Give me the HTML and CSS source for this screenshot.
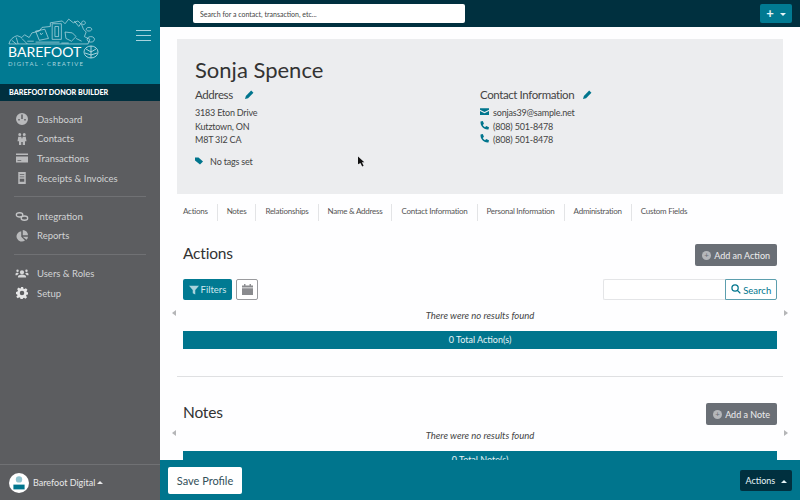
FILE: index.html
```html
<!DOCTYPE html>
<html>

<head>
    <title>Sonja Spence - Barefoot Donor Builder</title>
    <link rel="stylesheet" href="styles.css">
</head>

<body>
    <aside class="sidebar">
        <div class="brand">
            <div class="logo">
                <svg class="doodle" viewBox="0 0 100 30" width="92" height="28">
                    <g fill="none" stroke="#cfe6ec" stroke-width=".7">
                        <path d="M1 28c1-5 5-8 9-9l5 2 3-3 5 3 3-5 8-2 3-4 9-1V5l13-2 3 3 4-5 5 4 5-2 4 4 2 5 3 3-2 5 6 3-2 5z"/>
                        <path d="M30 14l10-2 4 10-10 2zM35 16l1 2 2-2"/>
                        <path d="M48 6h10v17H48zM51 9h4v11h-4z"/>
                        <path d="M62 15l8 1 4 4-5 5-6-3zM72 3l5 6 2-3M82 3a2 2 0 1 0 .1 0M88 10a3 2 0 1 0 .1 0"/>
                        <path d="M4 24l5 4M9 21l2 7M15 22l6 6M21 25h7M30 26h26M58 27h8M74 22l6 3M90 20a4 3 0 1 0 .1 0"/>
                    </g>
                </svg>
                <div class="wordmark">BAREFOOT
                    <svg viewBox="0 0 16 14" width="16" height="14">
                        <g fill="none" stroke="#cfe6ec" stroke-width=".8"><ellipse cx="8" cy="7" rx="7" ry="6"/><path d="M3 4l5 3 5-3M2 8l6 2 6-2M8 1v12"/></g>
                    </svg>
                </div>
                <div class="tagline">DIGITAL · CREATIVE</div>
            </div>
            <div class="burger"><span></span><span></span><span></span></div>
        </div>
        <div class="product">BAREFOOT DONOR BUILDER</div>
        <nav class="nav">
            <a class="nav-item">
                <svg viewBox="0 0 16 16" width="12" height="12"><path fill="#b9babc" d="M8 0a8 8 0 1 0 0 16A8 8 0 0 0 8 0zm-1 2h2v6H7zM3 8h2v2H3zm8 0h2v2h-2z"/></svg>
                Dashboard
            </a>
            <a class="nav-item">
                <svg viewBox="0 0 16 16" width="12" height="12"><path fill="#b9babc" d="M5 0a2 2 0 1 1 0 4 2 2 0 0 1 0-4zm6 0a2 2 0 1 1 0 4 2 2 0 0 1 0-4zM3 5h4l1 3 1-3h4l1 6h-2v5h-3v-4H7v4H4v-5H2z"/></svg>
                Contacts
            </a>
            <a class="nav-item">
                <svg viewBox="0 0 16 16" width="12" height="12"><path fill="#b9babc" d="M0 2h16v2H0zM0 6h16v8H0zm2 5v1h5v-1z"/></svg>
                Transactions
            </a>
            <a class="nav-item">
                <svg viewBox="0 0 16 16" width="12" height="12"><path fill="#b9babc" d="M3 0h10v16H3zm2 3v1h6V3zm0 3v1h6V6zm0 3v4h6V9z"/></svg>
                Receipts &amp; Invoices
            </a>
            <hr class="nav-rule">
            <a class="nav-item">
                <svg viewBox="0 0 16 16" width="13" height="13"><g fill="none" stroke="#c4c5c7" stroke-width="1.6"><ellipse cx="5" cy="6" rx="4" ry="2.6"/><ellipse cx="11" cy="10" rx="4" ry="2.6"/></g></svg>
                Integration
            </a>
            <a class="nav-item">
                <svg viewBox="0 0 16 16" width="12" height="12"><path fill="#b9babc" d="M7 1.5V9l5 5A7 7 0 1 1 7 1.5zM9 0a7 7 0 0 1 7 7H9zm0 9h7a7 7 0 0 1-2 4z"/></svg>
                Reports
            </a>
            <hr class="nav-rule">
            <a class="nav-item">
                <svg viewBox="0 0 16 16" width="13" height="13"><path fill="#d6d7d8" d="M8 4a2.6 2.6 0 1 1 0 5.200A2.600 2.600 0 0 1 8 4zM3 12c0-2 2-2.500 5-2.500s5 .5 5 2.500v1H3zM2.500 3a1.500 1.500 0 1 1 0 3 1.500 1.500 0 0 1 0-3zm11 0a1.500 1.500 0 1 1 0 3 1.500 1.500 0 0 1 0-3zM0 9c0-1.500 1-2 3-2l1 1-2 2H0zm16 0c0-1.500-1-2-3-2l-1 1 2 2h2z"/></svg>
                Users &amp; Roles
            </a>
            <a class="nav-item">
                <svg viewBox="0 0 16 16" width="12" height="12"><path fill="#e6e6e7" fill-rule="evenodd" d="M6.500 0h3l.4 2.200 1.400.6L13.200 1.500l2.100 2.100L14 5.500l.6 1.400 1.400.1v3l-2 .4-.6 1.400 1.300 1.800-2.100 2.100-1.900-1.300-1.400.6-.3 1.400h-3l-.4-2-1.400-.6-1.800 1.300-2.100-2.100L2 11.200l-.6-1.400L0 9.500v-3l2-.4.600-1.400L1.500 2.800l2.100-2.100L5.400 2l1.400-.6zM8 5a3 3 0 1 0 0 6 3 3 0 0 0 0-6z"/></svg>
                Setup
            </a>
        </nav>
        <div class="user">
            <span class="avatar">
                <svg viewBox="0 0 20 20" width="16" height="16"><circle cx="10" cy="5.500" r="4" fill="#8fc3cf"/><path fill="#00758d" d="M3 12h14v6H3z"/></svg>
            </span>
            Barefoot Digital <i class="caret-up"></i>
        </div>
    </aside>

    <main class="main">
        <header class="topbar">
            <input class="global-search" type="text" placeholder="Search for a contact, transaction, etc...">
            <button class="add-btn">+ <i class="caret-down"></i></button>
        </header>

        <div class="content">
            <section class="profile">
                <h1>Sonja Spence</h1>
                <div class="profile-cols">
                    <div class="profile-col">
                        <h2>Address <svg class="pencil pencil-far" viewBox="0 0 16 16" width="9" height="9"><path d="M11 1l4 4-9.500 9.500L0 16l1.500-5.500z"/></svg></h2>
                        <p>3183 Eton Drive</p>
                        <p>Kutztown, ON</p>
                        <p>M8T 3I2 CA</p>
                        <p class="tags">
                            <svg viewBox="0 0 16 16" width="8" height="8"><path fill="#00758d" d="M0 1h7l9 8-6 6-10-8z"/></svg>
                            No tags set
                        </p>
                    </div>
                    <div class="profile-col">
                        <h2>Contact Information <svg class="pencil" viewBox="0 0 16 16" width="9" height="9"><path d="M11 1l4 4-9.500 9.500L0 16l1.500-5.500z"/></svg></h2>
                        <p class="contact-line">
                            <svg viewBox="0 0 16 16" width="9" height="9"><path fill="#00758d" d="M0 2h16v3L8 9 0 5zm0 5l8 4 8-4v7H0z"/></svg>
                            sonjas39@sample.net
                        </p>
                        <p class="contact-line">
                            <svg viewBox="0 0 16 16" width="9" height="9"><path fill="#00758d" d="M1 1l4-1 2 5-2 2c1 2 2 3 4 4l2-2 5 2-1 4c-8 1-15-6-14-14z"/></svg>
                            (808) 501-8478
                        </p>
                        <p class="contact-line">
                            <svg viewBox="0 0 16 16" width="9" height="9"><path fill="#00758d" d="M1 1l4-1 2 5-2 2c1 2 2 3 4 4l2-2 5 2-1 4c-8 1-15-6-14-14z"/></svg>
                            (808) 501-8478
                        </p>
                    </div>
                </div>
                <svg class="cursor" viewBox="0 0 10 14" width="7" height="11"><path fill="#111" d="M0 0l9 8H5.500L8 13l-2 1-2.500-5L0 11z"/></svg>
            </section>

            <nav class="tabs">
                <a>Actions</a>
                <a>Notes</a>
                <a>Relationships</a>
                <a>Name &amp; Address</a>
                <a>Contact Information</a>
                <a>Personal Information</a>
                <a>Administration</a>
                <a>Custom Fields</a>
            </nav>

            <section class="panel">
                <div class="panel-head">
                    <h3>Actions</h3>
                    <button class="grey-btn"><i class="plus-dot">+</i> Add an Action</button>
                </div>
                <div class="toolbar">
                    <button class="filter-btn">
                        <svg viewBox="0 0 16 16" width="10" height="10"><path fill="#a9d3dc" d="M0 1h16l-6 7v7l-4-2V8z"/></svg>
                        Filters
                    </button>
                    <button class="cal-btn">
                        <svg viewBox="0 0 16 16" width="11" height="11"><path fill="#8a8b8e" d="M3 0h2v2h6V0h2v2h3v3H0V2h3zM0 6h16v10H0z"/></svg>
                    </button>
                    <div class="search-group">
                        <input type="text">
                        <button>
                            <svg viewBox="0 0 16 16" width="10" height="10"><g fill="none" stroke="#00758d" stroke-width="2"><circle cx="6.500" cy="6.500" r="5"/><path d="M10 10l5 5"/></g></svg>
                            Search
                        </button>
                    </div>
                </div>
                <div class="results"><i class="arrow-l"></i><em>There were no results found</em><i class="arrow-r"></i></div>
                <div class="total">0 Total Action(s)</div>
            </section>

            <hr class="panel-rule">

            <section class="panel">
                <div class="panel-head">
                    <h3>Notes</h3>
                    <button class="grey-btn"><i class="plus-dot">+</i> Add a Note</button>
                </div>
                <div class="results results-tight"><i class="arrow-l"></i><em>There were no results found</em><i class="arrow-r"></i></div>
                <div class="total">0 Total Note(s)</div>
            </section>
        </div>

        <footer class="savebar">
            <button class="save-btn">Save Profile</button>
            <button class="actions-btn">Actions <i class="caret-up"></i></button>
        </footer>
    </main>
</body>

</html>
```

FILE: styles.css
```css
* {
    box-sizing: border-box;
}

html,
body {
    height: 100%;
}

body {
    margin: 0;
    display: flex;
    overflow: hidden;
    font-family: "Lato", "Liberation Sans", sans-serif;
    color: #444;
    background: #fff;
}

button,
input {
    font-family: inherit;
}

/* sidebar */
.sidebar {
    width: 160px;
    flex-shrink: 0;
    display: flex;
    flex-direction: column;
    background-color: #5c5d60;
    color: #d2d3d4;
}

.brand {
    height: 84px;
    display: flex;
    justify-content: space-between;
    background-color: #017a92;
    padding: 18px 9px 0 8px;
}

.doodle {
    display: block;
}

.wordmark {
    display: flex;
    align-items: center;
    gap: 2px;
    height: 14px;
    margin-top: -1px;
    color: #fff;
    font-size: 14px;
    line-height: 14px;
}

.tagline {
    margin-top: 1px;
    color: #a8d4de;
    font-size: 6px;
    letter-spacing: 1.2px;
}

.burger {
    margin-top: 12px;
    width: 15px;
    display: flex;
    flex-direction: column;
    gap: 4px;
}

.burger span {
    height: 1px;
    background-color: #a8d4de;
}

.product {
    height: 17px;
    padding-left: 9px;
    background-color: #00303f;
    color: #fff;
    font-size: 7.200px;
    font-weight: 900;
    line-height: 17px;
}

.nav {
    flex: 1;
    padding-top: 8.500px;
}

.nav-item {
    height: 19.600px;
    display: flex;
    align-items: center;
    padding-left: 16px;
    font-size: 9.500px;
}

.nav-item svg {
    width: 22px;
    padding-right: 8px;
    margin-left: -1px;
    flex-shrink: 0;
}

.nav-rule {
    height: 1px;
    margin: 8.500px 14px 9px;
    border: 0;
    background-color: #707174;
}

.user {
    height: 36px;
    display: flex;
    align-items: center;
    padding-left: 9px;
    border-top: 1px solid #707174;
    font-size: 9px;
    color: #e8e8e9;
}

.avatar {
    width: 20px;
    height: 20px;
    margin-right: 4px;
    display: flex;
    align-items: center;
    justify-content: center;
    border-radius: 50%;
    background-color: #fff;
}

.caret-up,
.caret-down {
    display: inline-block;
    margin-left: 2px;
    vertical-align: middle;
    border-left: 3px solid transparent;
    border-right: 3px solid transparent;
}

.caret-up {
    border-bottom: 3px solid currentColor;
}

.caret-down {
    border-top: 3px solid currentColor;
}

/* main column */
.main {
    flex: 1;
    min-width: 0;
    display: flex;
    flex-direction: column;
}

.topbar {
    height: 27px;
    flex-shrink: 0;
    display: flex;
    align-items: flex-start;
    justify-content: space-between;
    padding: 4px 8px 0 33px;
    background-color: #00303f;
}

.global-search {
    width: 272px;
    height: 19px;
    padding: 0 7px;
    border: 0;
    border-radius: 2px;
    background-color: #fff;
    font-size: 7px;
}

.global-search::placeholder {
    color: #444;
}

.add-btn {
    width: 32px;
    height: 19px;
    padding: 0;
    border: 0;
    border-radius: 2px;
    background-color: #017a92;
    color: #e6f4f7;
    font-size: 13px;
    font-weight: 700;
    line-height: 19px;
}

.add-btn .caret-down {
    margin-left: 3px;
}

.content {
    flex: 1;
    min-height: 0;
    overflow: hidden;
    padding: 12px 17px 0;
    background-color: #fefeff;
}

.profile {
    position: relative;
    height: 155px;
    padding: 17px 18px 0;
    background-color: #ecedef;
}

.profile h1 {
    margin: 0;
    height: 27px;
    font-size: 22px;
    font-weight: 400;
    line-height: 27px;
    color: #333;
}

.profile-cols {
    display: flex;
    margin-top: 4px;
}

.profile-col {
    width: 285px;
}

.profile-col h2 {
    margin: 0 0 3px;
    height: 16px;
    font-size: 11.500px;
    font-weight: 400;
    letter-spacing: -.4px;
    line-height: 16px;
}

.pencil {
    margin-left: 6px;
    fill: #00758d;
}

.pencil-far {
    margin-left: 10px;
}

.profile-col p {
    margin: 0;
    height: 13.500px;
    font-size: 9px;
    letter-spacing: -.2px;
    line-height: 13.500px;
}

.profile-col .tags {
    margin-top: 8px;
}

.tags svg {
    margin-right: 5px;
}

.contact-line svg {
    margin-right: 2px;
}

.cursor {
    position: absolute;
    left: 181px;
    top: 117px;
}

.tabs {
    height: 17px;
    margin-top: 10px;
    display: flex;
    font-size: 8px;
    letter-spacing: -.25px;
    line-height: 15px;
    color: #555;
}

.tabs a {
    padding: 0 9px;
    border-left: 1px solid #e3e4e6;
}

.tabs a:first-child {
    padding-left: 6px;
    border-left: 0;
}

/* panels */
.panel {
    padding: 0 6px;
}

.panel-head {
    height: 22px;
    margin-top: 23px;
    display: flex;
    align-items: center;
    justify-content: space-between;
}

.panel-head h3 {
    margin: 0 0 4px;
    font-size: 15.500px;
    font-weight: 400;
    letter-spacing: -.2px;
    color: #333;
}

.grey-btn {
    height: 22px;
    display: flex;
    align-items: center;
    gap: 3px;
    padding: 0 7px;
    border: 0;
    border-radius: 2px;
    background-color: #6a6f76;
    color: #eee;
    font-size: 9px;
}

.plus-dot {
    width: 9px;
    height: 9px;
    border-radius: 50%;
    background-color: #b5b7ba;
    color: #6a6f76;
    font-size: 8px;
    font-style: normal;
    line-height: 9px;
    text-align: center;
}

.toolbar {
    height: 21px;
    margin-top: 13px;
    display: flex;
    gap: 4px;
}

.filter-btn {
    width: 49px;
    display: flex;
    align-items: center;
    justify-content: center;
    gap: 2px;
    padding: 0;
    border: 0;
    border-radius: 2px;
    background-color: #017a92;
    color: #cfe8ee;
    font-size: 9.500px;
}

.cal-btn {
    width: 22px;
    padding: 0;
    border: 1px solid #9a9b9e;
    border-radius: 2px;
    background-color: #fff;
}

.search-group {
    margin-left: auto;
    display: flex;
}

.search-group input {
    width: 122px;
    border: 1px solid #e4e5e7;
    border-right: 0;
    border-radius: 2px 0 0 2px;
    background-color: #fff;
}

.search-group button {
    width: 52px;
    padding: 0;
    border: 1px solid #5d9fae;
    border-radius: 0 2px 2px 0;
    background-color: #fff;
    color: #00758d;
    font-size: 9.500px;
}

.results {
    height: 20px;
    margin: 5px -11px 0;
    display: flex;
    align-items: center;
    justify-content: space-between;
    font-size: 9.500px;
}

.results-tight {
    margin-top: 0;
}

.arrow-l,
.arrow-r {
    position: relative;
    top: -2px;
    border-top: 3px solid transparent;
    border-bottom: 3px solid transparent;
}

.arrow-l {
    border-right: 4px solid #b5b6b8;
}

.arrow-r {
    border-left: 4px solid #b5b6b8;
}

.total {
    height: 18px;
    margin-top: 6px;
    background-color: #00758d;
    color: #e6f4f7;
    font-size: 9px;
    line-height: 18px;
    text-align: center;
}

.panel-rule {
    height: 1px;
    margin: 27px 0 0;
    border: 0;
    background-color: #dfe0e2;
}

.panel-rule + .panel .panel-head {
    margin-top: 26px;
}

/* bottom bar */
.savebar {
    height: 40px;
    flex-shrink: 0;
    display: flex;
    align-items: center;
    justify-content: space-between;
    padding: 0 8px;
    background-color: #00758d;
}

.save-btn {
    width: 74px;
    height: 27px;
    padding: 0;
    border: 0;
    border-radius: 2px;
    background-color: #fff;
    color: #33505a;
    font-size: 11px;
}

.actions-btn {
    width: 52px;
    height: 21px;
    padding: 0;
    border: 0;
    border-radius: 2px;
    background-color: #00303f;
    color: #e6f4f7;
    font-size: 9px;
}

.actions-btn .caret-up {
    margin-left: 3px;
}
```
